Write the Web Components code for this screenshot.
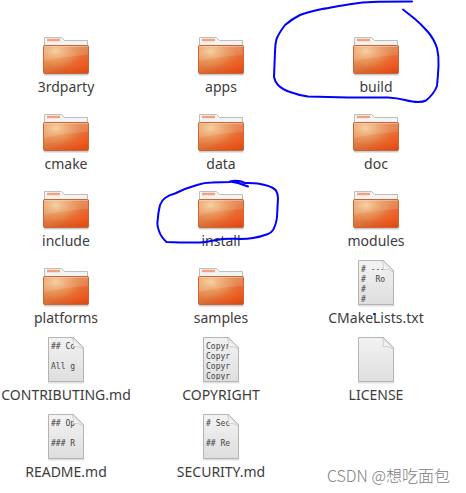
<!DOCTYPE html>
<html lang="en">
<head>
<meta charset="utf-8">
<title>Files</title>
<style>
    body {
        margin: 0;
        background: #fff;
        color: #3c3c3c;
        font-family: "Noto Sans", "Noto Sans CJK SC", sans-serif;
    }
</style>
</head>
<body>
<file-browser>
    <file-item name="3rdparty"><folder-icon></folder-icon></file-item>
    <file-item name="apps"><folder-icon></folder-icon></file-item>
    <file-item name="build">
        <folder-icon></folder-icon>
        <ink-mark slot="mark" origin="352 29" path="M412 1.5 L378 1.7 Q362 2 348 4.5 C338 6 330 8 322 9 Q308 12 300 15 Q292 19 285 25 Q279 33 276.5 39 Q275 45 275 52 L274 77 Q275 82 278 85 Q283 90 290 92 Q298 95 308 96.5 L348 97.5 L388 97.5 Q397 98 405 100 Q413 102 418 102 Q423 102 426 100.5 Q434 94 437 86 Q438 76 438.5 66 Q439 56 437 48 Q434 39 428 32 Q421 24 415 19 L403 9.5"></ink-mark>
    </file-item>
    <file-item name="cmake"><folder-icon></folder-icon></file-item>
    <file-item name="data"><folder-icon></folder-icon></file-item>
    <file-item name="doc"><folder-icon></folder-icon></file-item>
    <file-item name="include"><folder-icon></folder-icon></file-item>
    <file-item name="install">
        <folder-icon></folder-icon>
        <ink-mark slot="mark" origin="197 183" path="M248 186.5 L238 183 L230 181.5 Q238 179.5 245 183 Q257 182.5 265 185 Q273 187 276 190.5 Q278 194 278 198 L277 217 Q276 225 273 230 Q271 233 268 234 Q260 237 253 238 C242 240 232 238 223 239 C214 240 208 242 200 242.5 L180 242.5 L166.5 242 Q161 237 159 231 Q157 225 157.5 222 Q158 213 160 205 Q162 200 165 198 Q169 195 175 193.5 Q186 188 197 185 Q204 182.5 212 182.5 L230 182"></ink-mark>
    </file-item>
    <file-item name="modules"><folder-icon></folder-icon></file-item>
    <file-item name="platforms"><folder-icon></folder-icon></file-item>
    <file-item name="samples"><folder-icon></folder-icon></file-item>
    <file-item name="CMakeLists.txt">
        <document-icon># ---
#  Ro
#
#</document-icon>
        <ink-mark slot="mark" origin="352 260" path="M374 314 L374.5 314"></ink-mark>
    </file-item>
    <file-item name="CONTRIBUTING.md"><document-icon>## Co

All g</document-icon></file-item>
    <file-item name="COPYRIGHT"><document-icon>Copyr
Copyr
Copyr
Copyr</document-icon></file-item>
    <file-item name="LICENSE"><document-icon></document-icon></file-item>
    <file-item name="README.md"><document-icon>## Op

### R</document-icon></file-item>
    <file-item name="SECURITY.md"><document-icon># Sec

## Re</document-icon></file-item>
    <water-mark slot="watermark">CSDN @想吃面包</water-mark>
</file-browser>

<script>
/** Base class: attaches an open shadow root and fills it from markup(). */
class BaseElement extends HTMLElement {
    constructor() {
        super();
        this.attachShadow({ mode: 'open' });
    }

    connectedCallback() {
        this.shadowRoot.innerHTML = this.markup();
    }
}

/** Three-column icon view. */
class FileBrowser extends BaseElement {
    markup() {
        return `
            <style>
                :host {
                    display: block;
                    box-sizing: border-box;
                    position: relative;
                    min-height: 100vh;
                    overflow: hidden;
                    padding: 29px 24px 2px 0;
                }
                .grid {
                    display: grid;
                    grid-template-columns: repeat(3, minmax(0, 1fr));
                    gap: 9px 23px;
                }
            </style>
            <div class="grid"><slot></slot></div>
            <slot name="watermark"></slot>
        `;
    }
}

/** One entry: icon on top, name below, optional pen mark over both. */
class FileItem extends BaseElement {
    markup() {
        return `
            <style>
                :host {
                    display: flex;
                    flex-direction: column;
                    align-items: center;
                }
                .icon {
                    position: relative;
                    width: 48px;
                    height: 48px;
                }
                .name {
                    font-size: 14px;
                    line-height: 20px;
                    white-space: nowrap;
                }
            </style>
            <div class="icon"><slot></slot><slot name="mark"></slot></div>
            <span class="name">${this.getAttribute('name')}</span>
        `;
    }
}

class FolderIcon extends BaseElement {
    markup() {
        return `
            <style>
                :host { display: block; }
                svg { display: block; }
            </style>
            <svg width="48" height="48" viewBox="0 0 48 48" aria-hidden="true">
                <defs>
                    <linearGradient id="front" x1="0" y1="0" x2="1" y2="1">
                        <stop offset="0" stop-color="#e3925a"/>
                        <stop offset=".5" stop-color="#e27c42"/>
                        <stop offset=".8" stop-color="#ee5a20"/>
                        <stop offset="1" stop-color="#e04e1a"/>
                    </linearGradient>
                    <radialGradient id="glow" cx=".27" cy=".2" r=".6">
                        <stop offset="0" stop-color="#f6cf9a" stop-opacity=".95"/>
                        <stop offset="1" stop-color="#f0a060" stop-opacity="0"/>
                    </radialGradient>
                    <linearGradient id="foot" x1="0" y1="0" x2="0" y2="1">
                        <stop offset=".7" stop-color="#c04010" stop-opacity="0"/>
                        <stop offset="1" stop-color="#c04010" stop-opacity=".3"/>
                    </linearGradient>
                </defs>
                <path d="M2 45.5H46.5" stroke="#000" stroke-opacity=".2" stroke-width="2"/>
                <path d="M2.5 20V8.5H19.5L22.5 11.5H45.5V20Z" fill="#f3f3f3" stroke="#bdbdbd"/>
                <path d="M5 11H18" stroke="#f3a17c" stroke-width="2.4"/>
                <rect x="1.5" y="16.5" width="45" height="28" rx="1" fill="url(#front)"/>
                <rect x="1.5" y="16.5" width="45" height="28" rx="1" fill="url(#glow)"/>
                <path d="M2 17H46V26Q25 27 2 32Z" fill="#fff" fill-opacity=".12"/>
                <rect x="1.5" y="16.5" width="45" height="28" rx="1" fill="url(#foot)" stroke="#cc6434"/>
                <path d="M2.5 17.5H45.5" stroke="#fff" stroke-opacity=".3"/>
            </svg>
        `;
    }
}

/** Sheet of paper; the slotted text is the preview of its first lines. */
class DocumentIcon extends BaseElement {
    markup() {
        return `
            <style>
                :host {
                    display: grid;
                    width: 48px;
                    height: 48px;
                }
                svg, .preview { grid-area: 1 / 1; }
                .preview {
                    margin: 5px 0 0 9px;
                    width: 25px;
                    height: 38px;
                    overflow: hidden;
                    white-space: pre;
                    font: 8px/10px "DejaVu Sans Mono", monospace;
                    color: #444;
                }
            </style>
            <svg width="48" height="48" viewBox="0 0 48 48" aria-hidden="true">
                <defs>
                    <linearGradient id="sheet" x1="0" y1="0" x2="0" y2="1">
                        <stop offset="0" stop-color="#f3f3f3"/>
                        <stop offset="1" stop-color="#dedede"/>
                    </linearGradient>
                </defs>
                <path d="M6 45.5H42.5" stroke="#000" stroke-opacity=".12" stroke-width="2"/>
                <path d="M6.5 .5H31.5L41.5 10.5V44.5H6.5Z" fill="url(#sheet)" stroke="#b4b4b4"/>
            </svg>
            <div class="preview"><slot></slot></div>
            <svg width="48" height="48" viewBox="0 0 48 48" aria-hidden="true">
                <defs>
                    <linearGradient id="fold" x1="0" y1="1" x2=".8" y2=".2">
                        <stop offset="0" stop-color="#fff"/>
                        <stop offset=".5" stop-color="#f4f4f4"/>
                        <stop offset="1" stop-color="#c4c4c4"/>
                    </linearGradient>
                </defs>
                <path d="M30 1Q33 5 31 9.5Q37 8.5 41 12V10.5L31.5 1Z" fill="url(#fold)" stroke="#c2c2c2" stroke-width=".7"/>
            </svg>
        `;
    }
}

/** Freehand blue pen line laid over an icon. */
class InkMark extends BaseElement {
    markup() {
        return `
            <style>
                :host {
                    position: absolute;
                    inset: 0;
                    z-index: 1;
                    pointer-events: none;
                }
                svg { display: block; overflow: visible; }
            </style>
            <svg width="48" height="48" viewBox="${this.getAttribute('origin')} 48 48" aria-hidden="true">
                <path d="${this.getAttribute('path')}" fill="none" stroke="#00f" stroke-width="2" stroke-linecap="round" stroke-linejoin="round"/>
            </svg>
        `;
    }
}

class WaterMark extends BaseElement {
    markup() {
        return `
            <style>
                :host {
                    position: absolute;
                    right: 16px;
                    bottom: 6px;
                    font-family: "Noto Sans CJK SC", sans-serif;
                    font-size: 16px;
                    font-weight: 300;
                    line-height: 24px;
                    color: #808080;
                    white-space: nowrap;
                }
            </style>
            <slot></slot>
        `;
    }
}

customElements.define('file-browser', FileBrowser);
customElements.define('file-item', FileItem);
customElements.define('folder-icon', FolderIcon);
customElements.define('document-icon', DocumentIcon);
customElements.define('ink-mark', InkMark);
customElements.define('water-mark', WaterMark);
</script>
</body>
</html>
